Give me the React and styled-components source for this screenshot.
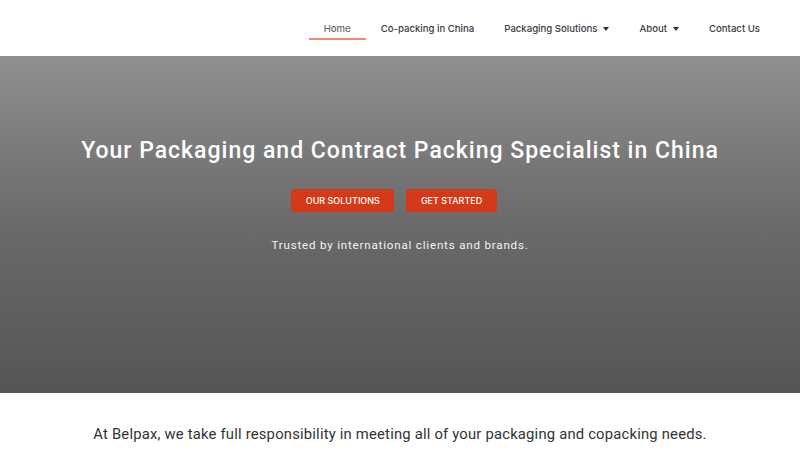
import React from "react";
import styled, { createGlobalStyle } from "styled-components";

const Global = createGlobalStyle`
  html, body { margin: 0; padding: 0; background: #fff; }
  body { font-family: Inter, "Liberation Sans", sans-serif; }
  * { box-sizing: border-box; }
`;

const Header = styled.header`
  height: 56px;
  display: flex;
  justify-content: flex-end;
  align-items: flex-start;
  padding: 22px 25px 0 0;
  background: #fff;
`;

const Nav = styled.nav`
  display: flex;
  align-items: center;
`;

const NavItem = styled.a`
  display: flex;
  align-items: center;
  gap: 6px;
  padding: 0 15px 3px;
  line-height: 13px;
  font-family: Inter, sans-serif;
  font-size: 9.6px;
  font-weight: 500;
  color: ${(p) => (p.$active ? "#6a6a6a" : "#3a3a3a")};
  text-decoration: none;
  border-bottom: 2px solid ${(p) => (p.$active ? "#f08a74" : "transparent")};
`;

const Caret = styled.span`
  display: inline-block;
  width: 0;
  height: 0;
  border-left: 3.5px solid transparent;
  border-right: 3.5px solid transparent;
  border-top: 4px solid #333;
`;

const Hero = styled.section`
  height: 337px;
  background: linear-gradient(180deg, #8f8f8f 0%, #6a6a6a 50%, #555555 100%);
  display: flex;
  flex-direction: column;
  align-items: center;
  padding-top: 80px;
  color: #fff;
`;

const Title = styled.h1`
  margin: 0;
  font-family: Roboto, sans-serif;
  font-weight: 500;
  font-size: 23px;
  letter-spacing: 1px;
  line-height: 30px;
`;

const Buttons = styled.div`
  display: flex;
  gap: 12px;
  margin-top: 23px;
  padding-right: 12px;
`;

const Button = styled.a`
  display: flex;
  align-items: center;
  justify-content: center;
  height: 23px;
  padding: 0 14.5px;
  background: #d53a18;
  color: #fff;
  font-family: Inter, sans-serif;
  font-size: 9px;
  font-weight: 500;
  border-radius: 3px;
  text-transform: uppercase;
`;

const Trusted = styled.p`
  margin: 26px 0 0;
  font-family: Roboto, sans-serif;
  font-size: 11.6px;
  letter-spacing: 0.8px;
  color: #f2f2f2;
`;

const Intro = styled.section`
  display: flex;
  justify-content: center;
  padding-top: 32px;
`;

const IntroText = styled.p`
  margin: 0;
  font-family: Roboto, sans-serif;
  font-size: 14.8px;
  letter-spacing: 0.2px;
  color: #333;
`;

export default function App() {
  return (
    <>
      <Global />
      <Header>
        <Nav>
          <NavItem $active>Home</NavItem>
          <NavItem>Co-packing in China</NavItem>
          <NavItem>
            Packaging Solutions <Caret />
          </NavItem>
          <NavItem>
            About <Caret />
          </NavItem>
          <NavItem>Contact Us</NavItem>
        </Nav>
      </Header>
      <Hero>
        <Title>Your Packaging and Contract Packing Specialist in China</Title>
        <Buttons>
          <Button>Our Solutions</Button>
          <Button>Get Started</Button>
        </Buttons>
        <Trusted>Trusted by international clients and brands.</Trusted>
      </Hero>
      <Intro>
        <IntroText>
          At Belpax, we take full responsibility in meeting all of your packaging and copacking needs.
        </IntroText>
      </Intro>
    </>
  );
}
